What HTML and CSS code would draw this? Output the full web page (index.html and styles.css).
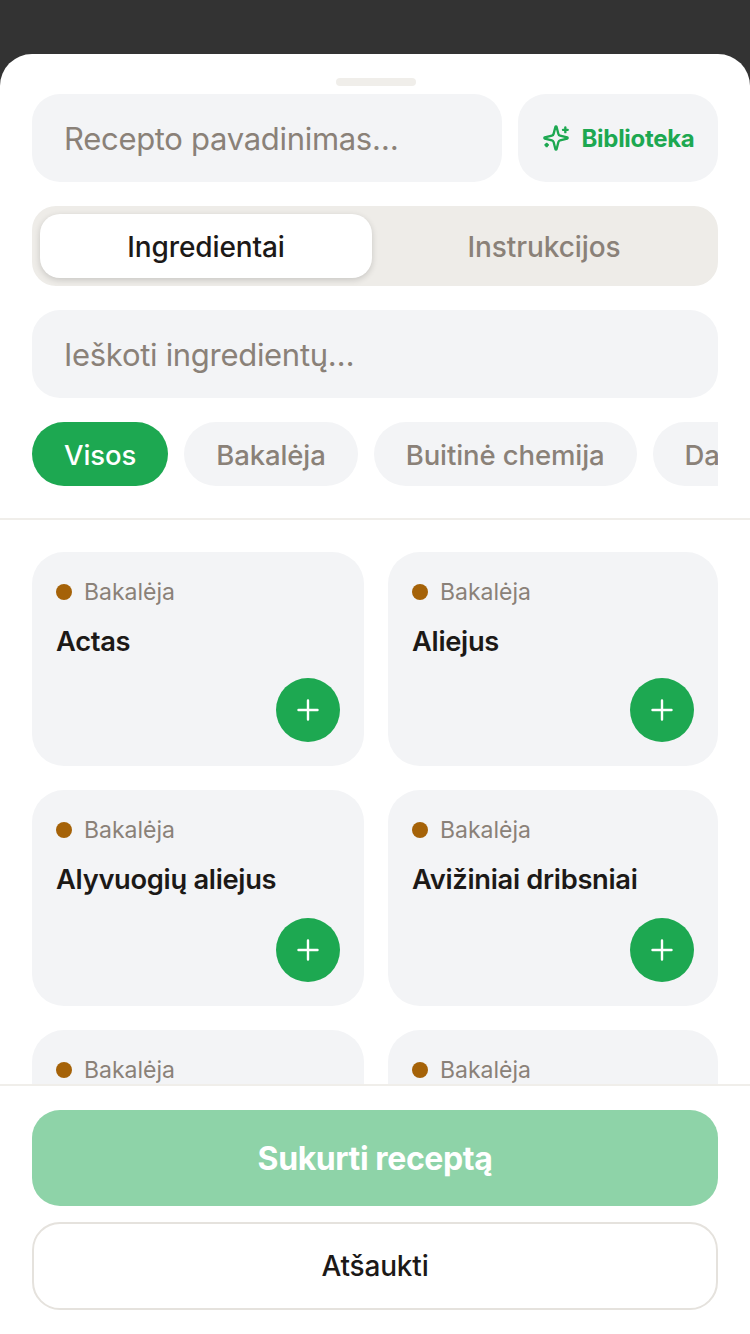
FILE: index.html
```html
<!DOCTYPE html>
<html lang="lt">
<head>
    <meta charset="UTF-8">
    <meta name="viewport" content="width=device-width, initial-scale=1.0">
    <title>Naujas receptas</title>
    <link rel="stylesheet" href="styles.css">
</head>
<body>
    <div class="sheet">
        <div class="handle"></div>

        <div class="top">
            <div class="title-row">
                <div class="field title-field">Recepto pavadinimas…</div>
                <div class="library-btn">
                    <svg class="spark" viewBox="0 0 24 24" width="28" height="28" fill="none" stroke="#1da851" stroke-width="2" stroke-linecap="round" stroke-linejoin="round">
                        <path d="M9.937 15.5A2 2 0 0 0 8.5 14.063l-6.135-1.582a.5.5 0 0 1 0-.962L8.5 9.936A2 2 0 0 0 9.937 8.5l1.582-6.135a.5.5 0 0 1 .963 0L14.063 8.5A2 2 0 0 0 15.5 9.937l6.135 1.581a.5.5 0 0 1 0 .964L15.5 14.063a2 2 0 0 0-1.437 1.437l-1.582 6.135a.5.5 0 0 1-.963 0z"/>
                        <path d="M20 3v4"/>
                        <path d="M22 5h-4"/>
                        <path d="M4 17v2"/>
                        <path d="M5 18H3"/>
                    </svg>
                    <span>Biblioteka</span>
                </div>
            </div>

            <div class="tabs">
                <div class="tab tab-active">Ingredientai</div>
                <div class="tab">Instrukcijos</div>
            </div>

            <div class="field">Ieškoti ingredientų…</div>

            <div class="chips">
                <div class="chip chip-active">Visos</div>
                <div class="chip">Bakalėja</div>
                <div class="chip">Buitinė chemija</div>
                <div class="chip">Daržovės</div>
            </div>
        </div>

        <div class="list">
            <div class="grid">
                <div class="card">
                    <div class="cat"><span class="dot"></span>Bakalėja</div>
                    <div class="name">Actas</div>
                    <div class="add"><svg viewBox="0 0 24 24" width="24" height="24"><path d="M12 2.5V21.5M2.5 12H21.5" stroke="#fff" stroke-width="2.4" stroke-linecap="round"/></svg></div>
                </div>
                <div class="card">
                    <div class="cat"><span class="dot"></span>Bakalėja</div>
                    <div class="name">Aliejus</div>
                    <div class="add"><svg viewBox="0 0 24 24" width="24" height="24"><path d="M12 2.5V21.5M2.5 12H21.5" stroke="#fff" stroke-width="2.4" stroke-linecap="round"/></svg></div>
                </div>
                <div class="card">
                    <div class="cat"><span class="dot"></span>Bakalėja</div>
                    <div class="name">Alyvuogių aliejus</div>
                    <div class="add"><svg viewBox="0 0 24 24" width="24" height="24"><path d="M12 2.5V21.5M2.5 12H21.5" stroke="#fff" stroke-width="2.4" stroke-linecap="round"/></svg></div>
                </div>
                <div class="card">
                    <div class="cat"><span class="dot"></span>Bakalėja</div>
                    <div class="name">Avižiniai dribsniai</div>
                    <div class="add"><svg viewBox="0 0 24 24" width="24" height="24"><path d="M12 2.5V21.5M2.5 12H21.5" stroke="#fff" stroke-width="2.4" stroke-linecap="round"/></svg></div>
                </div>
                <div class="card">
                    <div class="cat"><span class="dot"></span>Bakalėja</div>
                </div>
                <div class="card">
                    <div class="cat"><span class="dot"></span>Bakalėja</div>
                </div>
            </div>
        </div>

        <div class="footer">
            <div class="btn btn-primary">Sukurti receptą</div>
            <div class="btn btn-cancel">Atšaukti</div>
        </div>
    </div>
</body>
</html>
```

FILE: styles.css
```css
* {
    box-sizing: border-box;
}

html, body {
    height: 100%;
}

body {
    margin: 0;
    padding-top: 54px;
    overflow: hidden;
    background-color: #333333;
    font-family: Inter, "Noto Sans", sans-serif;
    color: #1c1917;
}

.sheet {
    height: 1280px;
    display: flex;
    flex-direction: column;
    background-color: #fff;
    border-radius: 32px 32px 0 0;
    overflow: hidden;
}

.handle {
    width: 80px;
    height: 8px;
    margin: 24px 0 8px 336px;
    border-radius: 4px;
    background-color: #f0eeea;
}

.top {
    display: flex;
    flex-direction: column;
    gap: 24px;
    padding: 0 32px 32px;
    border-bottom: 2px solid #f0eeea;
}

.title-row {
    display: flex;
    gap: 16px;
}

.field {
    height: 88px;
    display: flex;
    align-items: center;
    padding: 0 32px;
    border-radius: 28px;
    background-color: #f3f4f6;
    color: #8a8178;
    font-size: 31px;
    letter-spacing: -0.3px;
}

.title-field {
    flex: 1;
}

.library-btn {
    width: 200px;
    height: 88px;
    display: flex;
    align-items: center;
    justify-content: center;
    gap: 12px;
    border-radius: 28px;
    background-color: #f3f4f6;
    color: #1da851;
    font-size: 24px;
    font-weight: 700;
    letter-spacing: -0.3px;
}

.spark {
    flex-shrink: 0;
}

.tabs {
    height: 80px;
    display: flex;
    gap: 6px;
    padding: 8px;
    border-radius: 24px;
    background-color: #eeece8;
}

.tab {
    flex: 1;
    display: flex;
    align-items: center;
    justify-content: center;
    padding-top: 1px;
    border-radius: 20px;
    color: #8a8178;
    font-size: 28px;
    font-weight: 500;
    letter-spacing: -0.1px;
}

.tab-active {
    background-color: #fff;
    color: #1c1917;
    box-shadow: 0 2px 6px rgba(0, 0, 0, 0.16);
}

.chips {
    display: flex;
    gap: 16px;
    overflow: hidden;
}

.chip {
    flex-shrink: 0;
    height: 64px;
    display: flex;
    align-items: center;
    padding: 1px 32px 0;
    border-radius: 32px;
    background-color: #f3f4f6;
    color: #8a8178;
    font-size: 27.5px;
    font-weight: 500;
    letter-spacing: -0.1px;
}

.chip-active {
    background-color: #1da851;
    color: #fff;
}

.list {
    flex: 1;
    min-height: 0;
    overflow: hidden;
    padding: 32px 32px 0;
}

.grid {
    display: grid;
    grid-template-columns: 332px 330px;
    grid-template-rows: 214px 216px 216px;
    gap: 24px;
}

.card {
    position: relative;
    padding: 24px;
    border-radius: 32px;
    background-color: #f3f4f6;
}

.cat {
    height: 32px;
    display: flex;
    align-items: center;
    gap: 12px;
    color: #8a8178;
    font-size: 23px;
}

.dot {
    width: 16px;
    height: 16px;
    border-radius: 50%;
    background-color: #a56208;
}

.name {
    margin-top: 16px;
    font-size: 27.3px;
    font-weight: 600;
    line-height: 36px;
    letter-spacing: -0.3px;
}

.add {
    position: absolute;
    right: 24px;
    bottom: 24px;
    width: 64px;
    height: 64px;
    display: flex;
    align-items: center;
    justify-content: center;
    border-radius: 50%;
    background-color: #1da851;
}

.footer {
    display: flex;
    flex-direction: column;
    gap: 16px;
    height: 250px;
    padding: 24px 32px 0;
    border-top: 2px solid #f0eeea;
    background-color: #fff;
}

.btn {
    display: flex;
    align-items: center;
    justify-content: center;
    border-radius: 28px;
}

.btn-primary {
    height: 96px;
    background-color: #8ed3a8;
    color: #fff;
    font-size: 32px;
    font-weight: 700;
    letter-spacing: -0.4px;
}

.btn-cancel {
    height: 88px;
    border: 2px solid #e5e2dd;
    font-size: 28px;
    font-weight: 500;
    letter-spacing: -0.2px;
}
```
